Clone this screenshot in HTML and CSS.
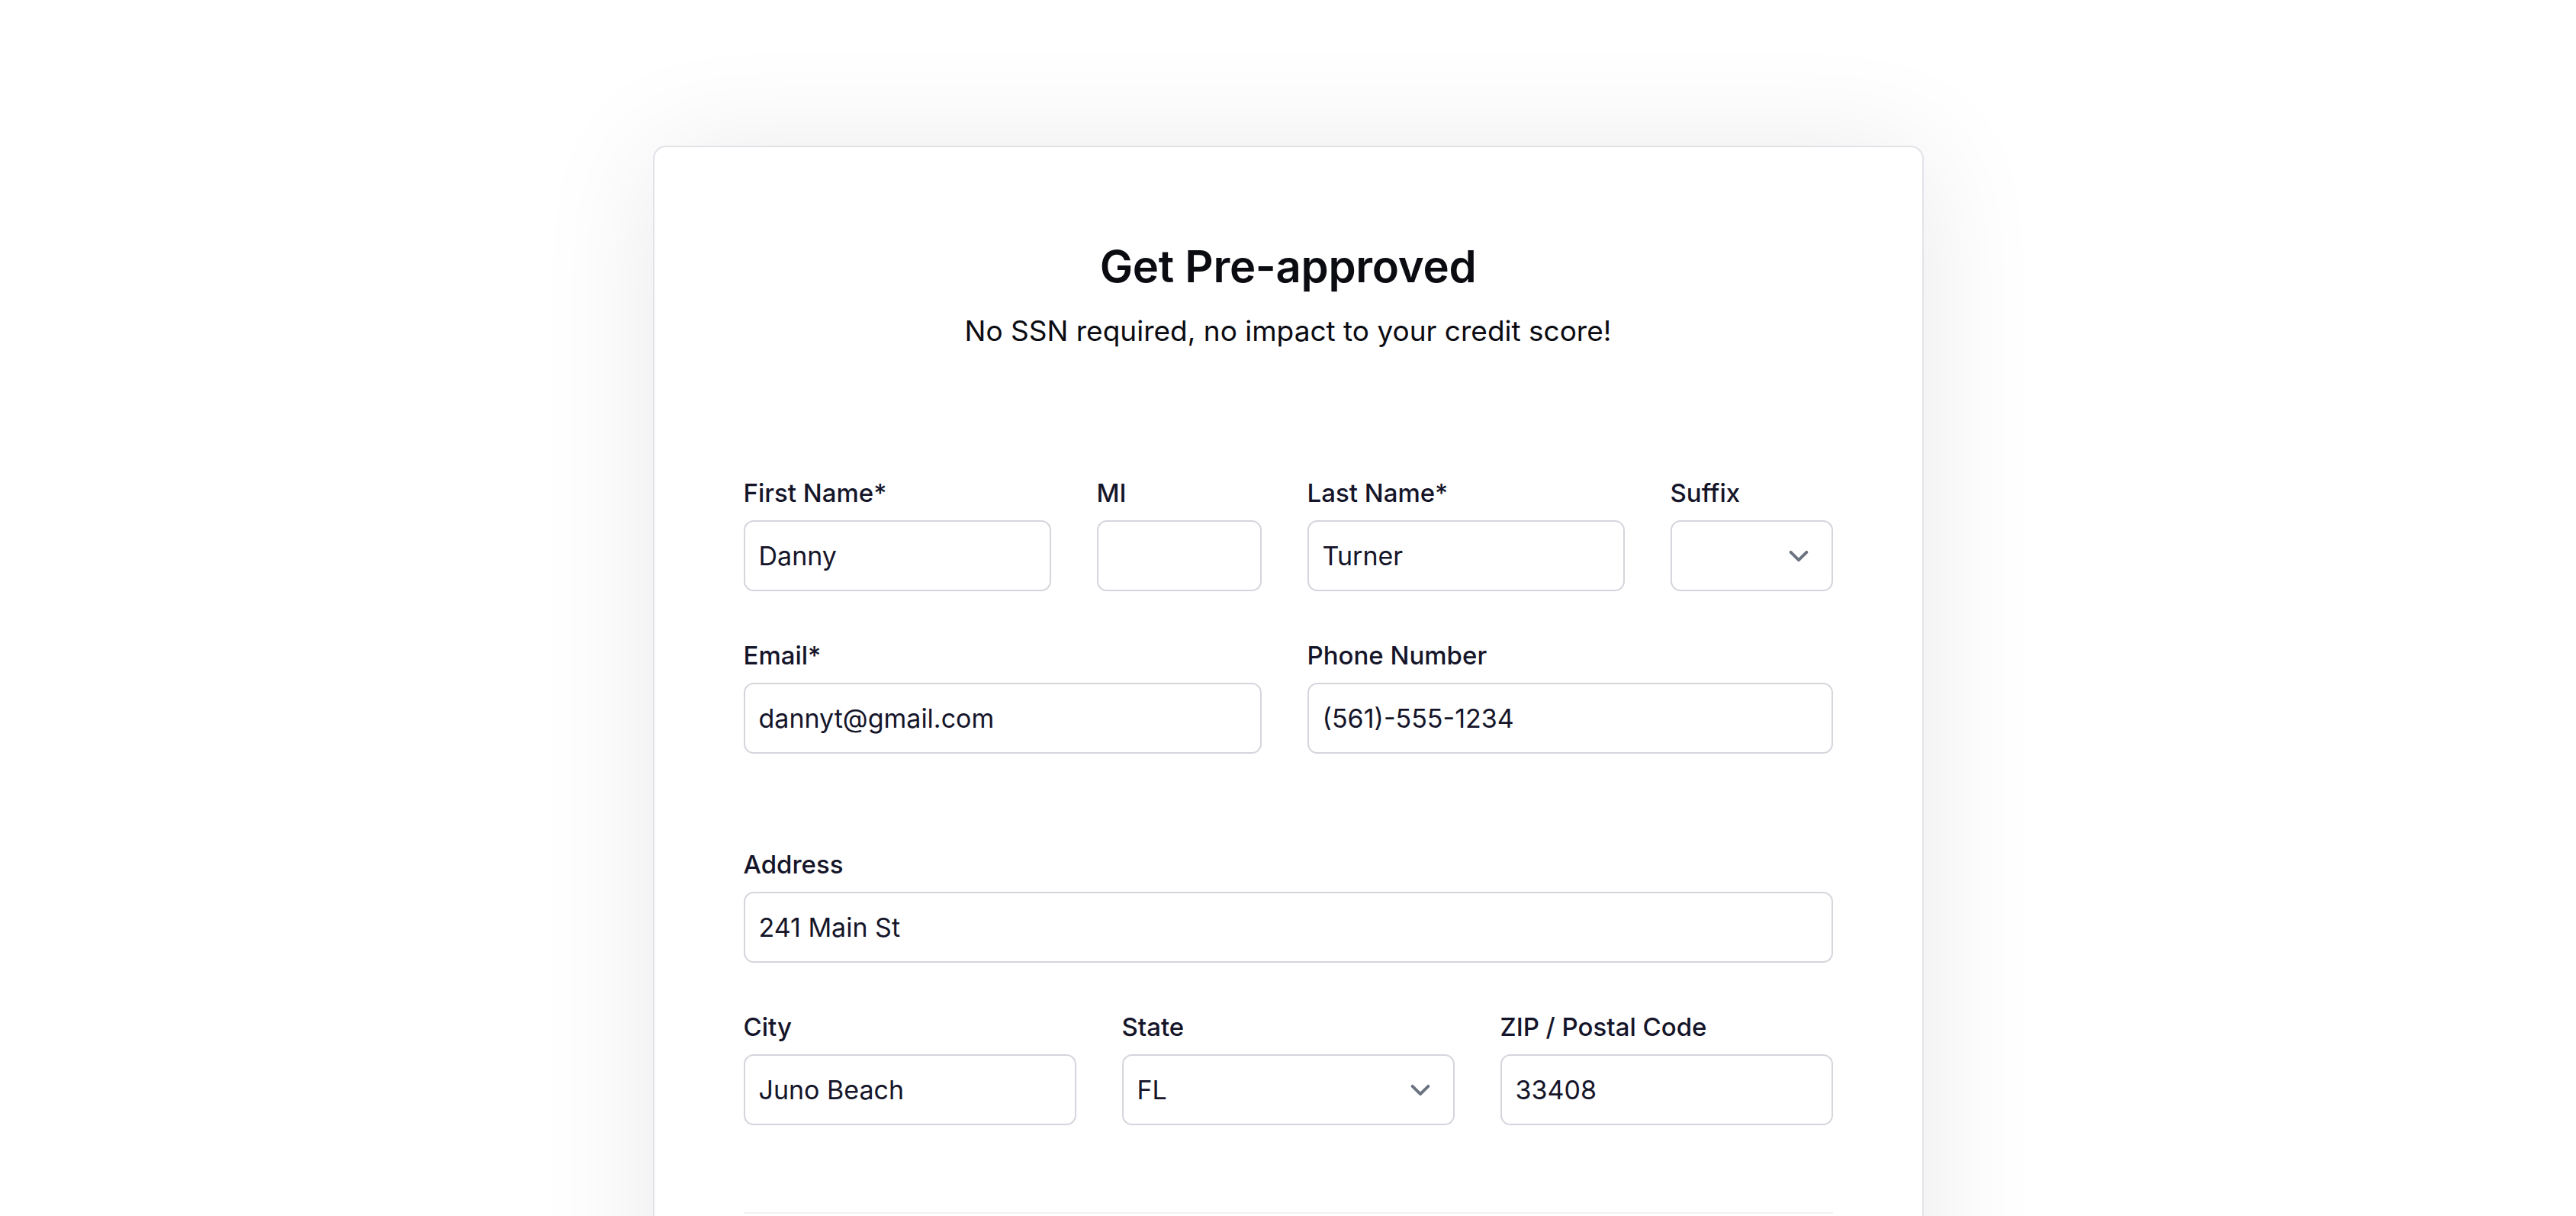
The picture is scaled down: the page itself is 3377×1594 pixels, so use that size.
FILE: index.html
```html
<!DOCTYPE html>
<html lang="en">
<head>
    <meta charset="UTF-8">
    <title>Get Pre-approved</title>
    <link rel="stylesheet" href="styles.css">
</head>
<body>
    <div class="page">
        <div class="card">
            <div class="card-head">
                <h1 class="title">Get Pre-approved</h1>
                <p class="subtitle">No SSN required, no impact to your credit score!</p>
            </div>

            <div class="name-grid">
                <div class="field">
                    <label class="field-label">First Name*</label>
                    <input class="field-input" type="text" value="Danny">
                </div>
                <div class="field">
                    <label class="field-label">MI</label>
                    <input class="field-input" type="text" value="">
                </div>
                <div class="field">
                    <label class="field-label">Last Name*</label>
                    <input class="field-input" type="text" value="Turner">
                </div>
                <div class="field">
                    <label class="field-label">Suffix</label>
                    <div class="select-wrap">
                        <select class="field-input field-select">
                            <option></option>
                            <option>Jr.</option>
                            <option>Sr.</option>
                        </select>
                        <svg class="chevron" viewBox="0 0 20 20" fill="none"><path d="M6 8l4 4 4-4" stroke="#6b7280" stroke-width="1.5" stroke-linecap="round" stroke-linejoin="round"/></svg>
                    </div>
                </div>
                <div class="field span-2">
                    <label class="field-label">Email*</label>
                    <input class="field-input" type="text" value="dannyt@gmail.com">
                </div>
                <div class="field span-2">
                    <label class="field-label">Phone Number</label>
                    <input class="field-input" type="text" value="(561)-555-1234">
                </div>
            </div>

            <div class="address-grid">
                <div class="field span-3">
                    <label class="field-label">Address</label>
                    <input class="field-input" type="text" value="241 Main St">
                </div>
                <div class="field">
                    <label class="field-label">City</label>
                    <input class="field-input" type="text" value="Juno Beach">
                </div>
                <div class="field">
                    <label class="field-label">State</label>
                    <div class="select-wrap">
                        <select class="field-input field-select">
                            <option>FL</option>
                            <option>GA</option>
                            <option>NY</option>
                        </select>
                        <svg class="chevron" viewBox="0 0 20 20" fill="none"><path d="M6 8l4 4 4-4" stroke="#6b7280" stroke-width="1.5" stroke-linecap="round" stroke-linejoin="round"/></svg>
                    </div>
                </div>
                <div class="field">
                    <label class="field-label">ZIP / Postal Code</label>
                    <input class="field-input" type="text" value="33408">
                </div>
            </div>

            <div class="divider"></div>
        </div>
    </div>
</body>
</html>
```

FILE: styles.css
```css
* {
    margin: 0;
    padding: 0;
    box-sizing: border-box;
}
body {
    background-color: #fff;
    font-family: Inter, "Noto Sans", sans-serif;
    color: #111827;
}
.page {
    display: flex;
    justify-content: center;
    padding-top: 191px;
}
.card {
    width: 1666px;
    background-color: #fff;
    border: 2px solid #e2e2e8;
    border-radius: 17px;
    box-shadow: 0 10px 160px rgba(0, 0, 0, 0.09);
    padding: 117px 117px 300px;
}

.card-head {
    text-align: center;
    margin-bottom: 159px;
}
.card-head .title {
    font-size: 58px;
    line-height: 78px;
    font-weight: 600;
    color: #0b0b12;
    letter-spacing: -0.3px;
}
.card-head .subtitle {
    margin-top: 16px;
    font-size: 37px;
    line-height: 60px;
    color: #0b0b12;
}

.name-grid {
    display: grid;
    grid-template-columns: 403px 216px 416px 1fr;
    column-gap: 60px;
    row-gap: 61px;
}
.address-grid {
    display: grid;
    grid-template-columns: 1fr 1fr 1fr;
    column-gap: 60px;
    row-gap: 61px;
    margin-top: 122px;
}
.span-2 {
    grid-column: span 2;
}
.span-3 {
    grid-column: span 3;
}

.field .field-label {
    display: block;
    font-size: 33px;
    line-height: 46px;
    font-weight: 500;
    color: #15152a;
    margin-bottom: 13px;
}
.field .field-input {
    display: block;
    width: 100%;
    height: 93px;
    border: 2px solid #d4d6dc;
    border-radius: 13px;
    padding: 0 18px;
    font-family: inherit;
    font-size: 34px;
    color: #15152a;
    background-color: #fff;
    outline: none;
}
.select-wrap {
    position: relative;
}
.field .field-select {
    appearance: none;
    -webkit-appearance: none;
    cursor: pointer;
}
.select-wrap .chevron {
    position: absolute;
    right: 19px;
    top: 50%;
    width: 52px;
    height: 52px;
    margin-top: -26px;
    pointer-events: none;
}

.divider {
    margin-top: 114px;
    border-top: 2px solid #f1f1f4;
}
```
